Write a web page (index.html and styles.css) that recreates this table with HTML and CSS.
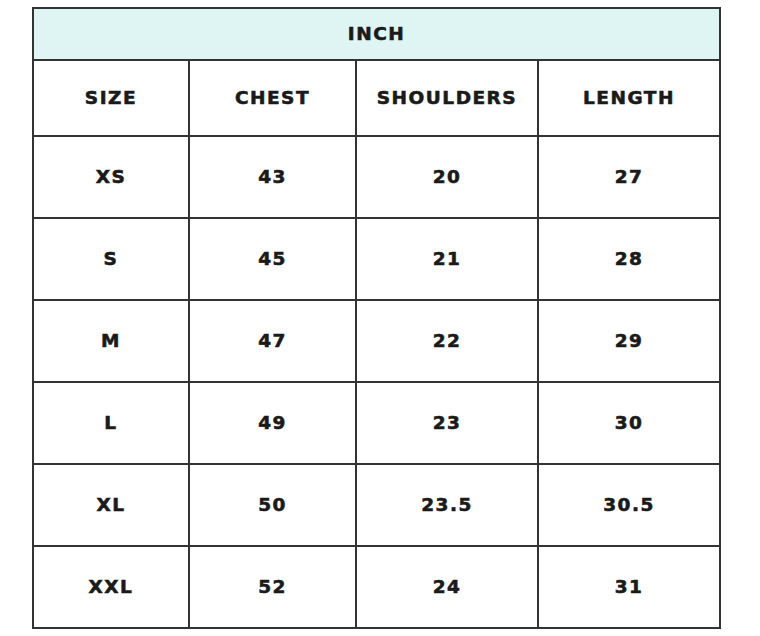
FILE: index.html
```html
<!DOCTYPE html>
<html>
<head>
<meta charset="utf-8">
<link rel="stylesheet" href="styles.css">
</head>
<body>
<table class="size-chart">
  <colgroup>
    <col class="c1"><col class="c2"><col class="c3"><col class="c4">
  </colgroup>
  <thead>
    <tr class="unit-row"><th colspan="4">INCH</th></tr>
    <tr class="head-row"><th>SIZE</th><th>CHEST</th><th>SHOULDERS</th><th>LENGTH</th></tr>
  </thead>
  <tbody>
    <tr><td>XS</td><td>43</td><td>20</td><td>27</td></tr>
    <tr><td>S</td><td>45</td><td>21</td><td>28</td></tr>
    <tr><td>M</td><td>47</td><td>22</td><td>29</td></tr>
    <tr><td>L</td><td>49</td><td>23</td><td>30</td></tr>
    <tr><td>XL</td><td>50</td><td>23.5</td><td>30.5</td></tr>
    <tr><td>XXL</td><td>52</td><td>24</td><td>31</td></tr>
  </tbody>
</table>
</body>
</html>
```
FILE: styles.css
```css
html, body {
  margin: 0;
  padding: 0;
  background: #ffffff;
}
body {
  padding: 7px 0 0 32px;
  font-family: "DejaVu Sans", "Liberation Sans", sans-serif;
  color: #1a1a1a;
}
.size-chart {
  border-collapse: collapse;
  table-layout: fixed;
  width: 689px;
  border: 2px solid #2a2a2a;
}
.c1 { width: 156px; }
.c2 { width: 167px; }
.c3 { width: 182px; }
.c4 { width: 182px; }
.size-chart th,
.size-chart td {
  border: 2px solid #333333;
  text-align: center;
  vertical-align: middle;
  padding: 0;
  font-weight: bold;
  font-size: 18.5px;
  letter-spacing: 1.5px;
  line-height: 20px;
  -webkit-text-stroke: 0.6px #1a1a1a;
}
.unit-row th {
  background: #dff5f4;
  height: 50px;
}
.head-row th {
  height: 74px;
}
.size-chart tbody td {
  height: 80px;
}
```
